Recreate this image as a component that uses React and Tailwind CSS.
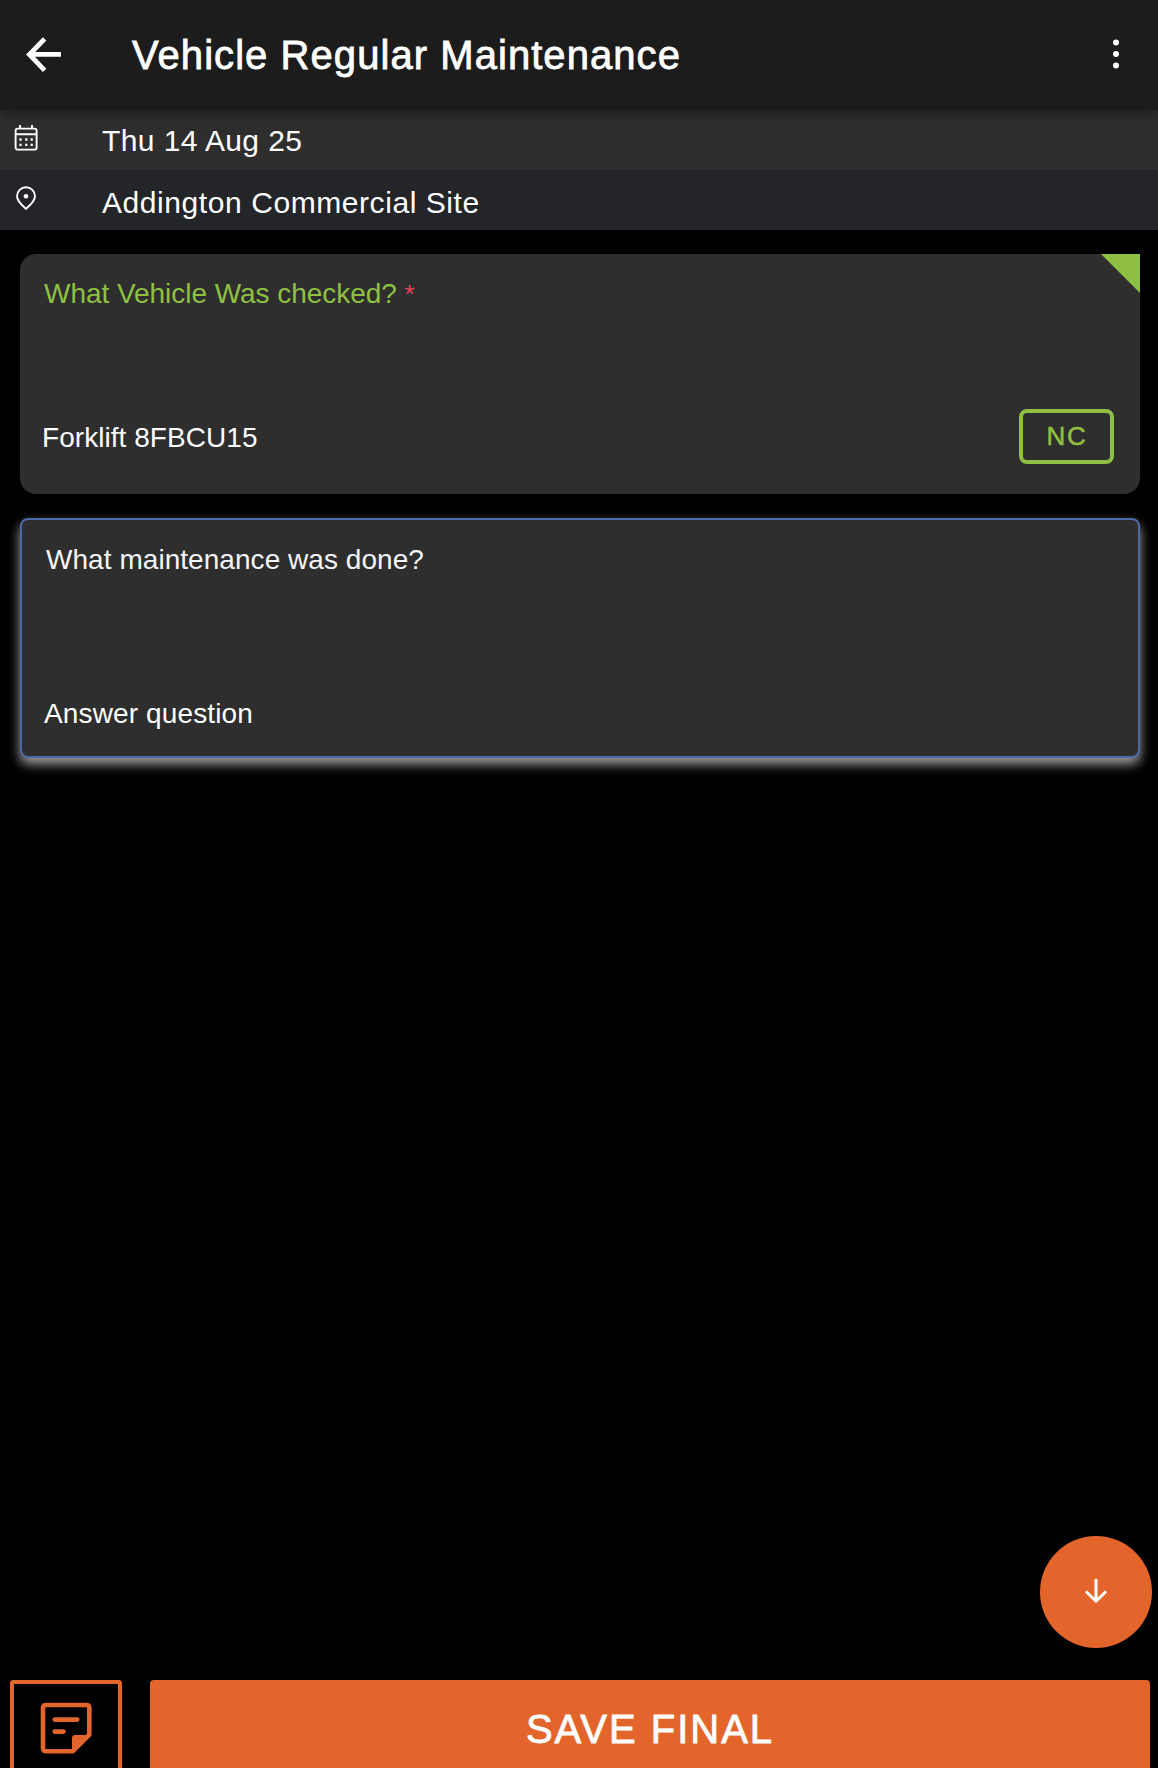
function BackIcon() {
  return (
    <svg width="36" height="36" viewBox="0 0 36 36" fill="none" stroke="currentColor" strokeWidth="4.8">
      <path d="M18.6 1.8L3.4 17.5L18.6 33.4M3 17.3H35" />
    </svg>
  );
}

function MoreIcon() {
  return (
    <svg width="8" height="32" viewBox="0 0 8 32" fill="currentColor">
      <circle cx="4" cy="4.6" r="3" />
      <circle cx="4" cy="16" r="3" />
      <circle cx="4" cy="27.6" r="3" />
    </svg>
  );
}

function CalendarIcon() {
  return (
    <svg width="24" height="28" viewBox="0 0 24 28" fill="none" stroke="currentColor" strokeWidth="1.9">
      <rect x="1.6" y="4.6" width="21" height="21" rx="2" />
      <path d="M1.8 10.3H22.8M6 1V4.8M18 1V4.8" />
      <path d="M5.4 15.5H7.6M11.2 15.5H13.4M16.6 15.5H18.8M5.4 20.8H7.6M11.2 20.8H13.4M16.6 20.8H18.8" strokeWidth="2.3" />
    </svg>
  );
}

function PinIcon() {
  return (
    <svg width="22" height="25" viewBox="0 0 22 25" fill="none" stroke="currentColor" strokeWidth="1.9">
      <path d="M11 22.8C8.2 20.2 2 15.4 2 10.2A9 9 0 0 1 20 10.2C20 15.4 13.8 20.2 11 22.8Z" />
      <circle cx="11" cy="10.3" r="2.3" fill="currentColor" stroke="none" />
    </svg>
  );
}

function NoteIcon() {
  return (
    <svg width="52" height="52" viewBox="0 0 52 52" fill="none" stroke="currentColor" strokeWidth="4.6" strokeLinecap="round" strokeLinejoin="round">
      <path d="M32.6 49.3H6Q3 49.3 3 46.3V6Q3 3 6 3H46.3Q49.3 3 49.3 6V32.6Z" />
      <path d="M32 50V36Q32 33 35 33H50.5L33.5 50Z" fill="currentColor" stroke="none" />
      <path d="M14.8 17.6H37.2M14.8 29.6H23.4" strokeWidth="4.8" />
    </svg>
  );
}

function DownIcon() {
  return (
    <svg width="24" height="26" viewBox="0 0 24 26" fill="none" stroke="currentColor" strokeWidth="3" strokeLinecap="round" strokeLinejoin="round">
      <path d="M12 2V23M2.8 14.2L12 23.2L21.2 14.2" />
    </svg>
  );
}

export default function App() {
  return (
    <div className="relative flex h-[1768px] w-full flex-col overflow-hidden bg-black font-['Liberation_Sans',Arial,sans-serif] text-white">
      <header className="z-10 flex h-[110px] shrink-0 items-center bg-[#1c1c1c] pl-[26px] pr-[38px] shadow-[0_2px_14px_rgba(0,0,0,0.5)]">
        <BackIcon />
        <h1 className="ml-[70px] text-[40px] leading-[40px] tracking-[1.06px] [-webkit-text-stroke:0.8px_white]">Vehicle Regular Maintenance</h1>
        <div className="ml-auto pb-0.5">
          <MoreIcon />
        </div>
      </header>

      <div className="flex h-[60px] shrink-0 items-center bg-[#2e2e2e] pl-[14px]">
        <div className="w-[88px] pb-1"><CalendarIcon /></div>
        <span className="pt-px text-[30px] leading-[30px] tracking-[0.4px]">Thu 14 Aug 25</span>
      </div>
      <div className="flex h-[60px] shrink-0 items-center bg-[#242529] pl-[15px]">
        <div className="w-[87px] pb-1"><PinIcon /></div>
        <span className="pt-[5px] text-[30px] leading-[30px] tracking-[0.57px]">Addington Commercial Site</span>
      </div>

      <main className="flex flex-1 flex-col gap-6 pl-5 pr-[18px] pt-6">
        <section className="relative flex h-[240px] flex-col justify-between rounded-2xl rounded-tr-none bg-[#2e2e2e] pb-[30px] pl-[22px] pr-[26px] pt-[26px]">
          <svg className="absolute right-0 top-0" width="39" height="39" viewBox="0 0 39 39">
            <path d="M0 0H39V39Z" fill="#8fc043" />
          </svg>
          <div className="pl-0.5 text-[28px] leading-[28px] tracking-[-0.04px] text-[#8fc043]">
            What Vehicle Was checked? <span className="text-[26px] text-[#e8405a]">*</span>
          </div>
          <div className="flex items-center justify-between">
            <span className="pt-0.5 text-[28px] leading-[28px] tracking-[0.05px]">Forklift 8FBCU15</span>
            <button className="flex h-[55px] w-[95px] items-center justify-center rounded-lg border-4 border-[#8fc043] pb-0.5 pl-px text-[26px] leading-[26px] tracking-[1.8px] text-[#8fc043] [-webkit-text-stroke:0.5px_#8fc043]">
              NC
            </button>
          </div>
        </section>

        <section className="flex h-[240px] flex-col justify-between rounded-lg border-2 border-[#4a6aa8] bg-[#2e2e2e] pb-7 pl-[22px] pt-[26px] shadow-[0_6px_12px_0_rgba(244,245,252,0.66)]">
          <div className="pl-0.5 text-[28px] leading-[28px] tracking-[0.05px] text-[#f4f5f8]">What maintenance was done?</div>
          <span className="text-[28px] leading-[28px] tracking-[0.13px]">Answer question</span>
        </section>
      </main>

      <button className="mb-8 mr-1.5 flex size-28 shrink-0 items-center justify-center self-end rounded-full bg-[#e3652b] pb-0.5">
        <DownIcon />
      </button>

      <footer className="flex h-[88px] shrink-0 gap-7 pl-2.5 pr-2">
        <button className="flex w-28 justify-center rounded-t border-4 border-b-0 border-[#e3652b] pt-[18px] text-[#e3652b]">
          <NoteIcon />
        </button>
        <button className="flex flex-1 justify-center rounded-t bg-[#e3652b] pt-[29px] text-[40px] leading-[40px] tracking-[2px] [-webkit-text-stroke:0.8px_white]">
          SAVE FINAL
        </button>
      </footer>
    </div>
  );
}
